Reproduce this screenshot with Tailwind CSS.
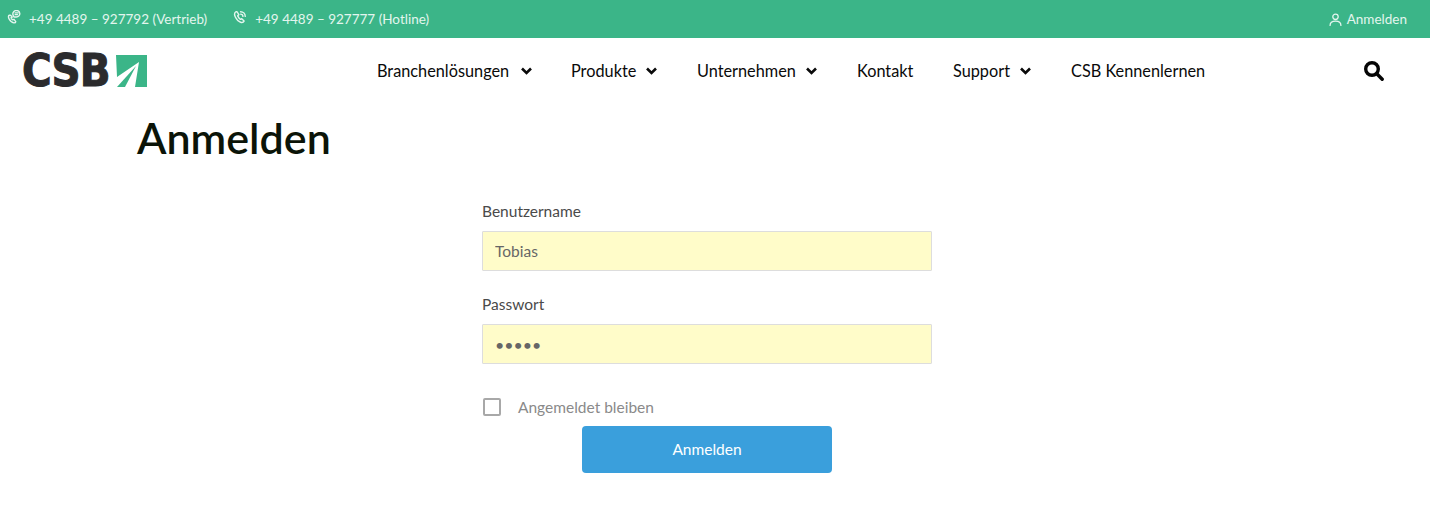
<!DOCTYPE html>
<html lang="de">
<head>
    <meta charset="UTF-8" />
    <title>Anmelden</title>
    <script src="https://cdn.jsdelivr.net/npm/@tailwindcss/browser@4"></script>
</head>
<body class="bg-white font-['Lato','Noto_Sans',sans-serif] min-h-screen overflow-hidden">
<!-- top bar -->
<div class="h-[38px] bg-[#3bb588] text-[#e3f5ee] text-[13.5px] flex items-center justify-between pl-[7px] pr-[23px]">
    <div class="flex items-center">
        <svg class="w-[14px] h-[14px] -mt-[5px]" viewBox="0 0 24 24" fill="none" stroke="currentColor" stroke-width="2.4" stroke-linecap="round" stroke-linejoin="round">
            <path d="M4 9c-2 1-2 4 0 7s5 6 8 6c2 0 3-1 3-2l-3-4-2 1c-2-1-3-2-3-4l2-1-3-3z" />
            <path d="M11 10a6 6 0 1 1 11-4c0 3-2 6-6 6h-4zM14 5h5M14 8h4" />
        </svg>
        <span class="ml-[8px]">+49 4489 – 927792 (Vertrieb)</span>
        <svg class="w-[14px] h-[14px] ml-[26px] -mt-[5px]" viewBox="0 0 24 24" fill="none" stroke="currentColor" stroke-width="2.4" stroke-linecap="round" stroke-linejoin="round">
            <path d="M5 3C2 5 2 8 4 12s6 8 9 9c3 1 5 0 6-2l-4-4-2 1c-2-1-4-4-5-6l2-2-3-5z" />
            <path d="M13 3a8 8 0 0 1 8 8M13 7a4 4 0 0 1 4 4" />
        </svg>
        <span class="ml-[8px]">+49 4489 – 927777 (Hotline)</span>
    </div>
    <a href="#" class="flex items-center">
        <svg class="w-[13px] h-[13px] mr-[5px]" viewBox="0 0 24 24" fill="none" stroke="currentColor" stroke-width="2.4" stroke-linecap="round">
            <circle cx="12" cy="7" r="5" />
            <path d="M2 23c0-6 4-8 10-8s10 2 10 8" />
        </svg>
        Anmelden
    </a>
</div>

<!-- nav -->
<div class="h-[66px] flex items-center relative text-[#0a0a0a] text-[16.300px]">
    <div class="flex items-center ml-[22px] w-[125px] h-[32px]">
        <span class="font-['DejaVu_Sans',sans-serif] font-bold text-[#2b2b2d] text-[44px] leading-none tracking-[-1px] [-webkit-text-stroke:1px_#2b2b2d] w-[93px] origin-left scale-x-[.92] whitespace-nowrap">CSB</span>
        <svg class="w-[32px] h-[32px]" viewBox="0 0 32 32">
            <path fill="#3bb588" d="M1 0H32V32H20L24 7 2 22z" />
            <path fill="#3bb588" d="M21 11 2 32H10z" />
        </svg>
    </div>
    <nav class="flex items-center ml-[230px]">
        <a href="#" class="flex items-center w-[194px]"><span class="w-[144px]">Branchenlösungen</span>
            <svg class="w-[11px] h-[8px]" viewBox="0 0 11 8" fill="none" stroke="currentColor" stroke-width="2.6"><path d="M1 1.500 5.500 6 10 1.500" /></svg>
        </a>
        <a href="#" class="flex items-center w-[126px]"><span class="w-[75px]">Produkte</span>
            <svg class="w-[11px] h-[8px]" viewBox="0 0 11 8" fill="none" stroke="currentColor" stroke-width="2.6"><path d="M1 1.500 5.500 6 10 1.500" /></svg>
        </a>
        <a href="#" class="flex items-center w-[160px]"><span class="w-[109px]">Unternehmen</span>
            <svg class="w-[11px] h-[8px]" viewBox="0 0 11 8" fill="none" stroke="currentColor" stroke-width="2.6"><path d="M1 1.500 5.500 6 10 1.500" /></svg>
        </a>
        <a href="#" class="w-[96px]">Kontakt</a>
        <a href="#" class="flex items-center w-[118px]"><span class="w-[67px]">Support</span>
            <svg class="w-[11px] h-[8px]" viewBox="0 0 11 8" fill="none" stroke="currentColor" stroke-width="2.6"><path d="M1 1.500 5.500 6 10 1.500" /></svg>
        </a>
        <a href="#">CSB Kennenlernen</a>
    </nav>
    <svg class="absolute left-[1364px] top-[23px] w-[20px] h-[20px]" viewBox="0 0 20 20" fill="none" stroke="#050505" stroke-width="3.4">
        <circle cx="8" cy="8" r="6.300" />
        <path d="M12.800 12.800 18.200 18.200" stroke-linecap="round" />
    </svg>
</div>

<main class="pl-[137px]">
    <h1 class="text-[43px] leading-[50px] font-semibold text-[#0b1408] mt-[9px]">Anmelden</h1>
    <form class="w-[450px] ml-[345px] mt-[38px]" onsubmit="event.preventDefault()">
        <label class="block text-[15.500px] leading-[20px] text-[#4a4a4a]" for="user">Benutzername</label>
        <input id="user" type="text" value="Tobias" class="block w-full h-[40px] mt-[10px] px-[12px] bg-[#fffcc9] border border-[#dddddd] rounded-[1px] text-[15.500px] text-[#666666]" />
        <label class="block text-[15.500px] leading-[20px] text-[#4a4a4a] mt-[23px]" for="pw">Passwort</label>
        <input id="pw" type="password" value="tobia" class="block w-full h-[40px] mt-[10px] px-[12px] bg-[#fffcc9] border border-[#dddddd] rounded-[1px] text-[16px] text-[#666666]" />
        <label class="flex items-center mt-[33px] text-[15.500px] leading-[20px] text-[#8a8a8a]">
            <input type="checkbox" class="appearance-none w-[18px] h-[18px] ml-[1px] border-2 border-[#a8a8a8] rounded-[2px] bg-white" />
            <span class="ml-[17px]">Angemeldet bleiben</span>
        </label>
        <button type="submit" class="block w-[250px] h-[47px] mx-auto mt-[9px] bg-[#3a9fdc] text-white text-[15.500px] rounded-[4px]">Anmelden</button>
    </form>
</main>
</body>
</html>
